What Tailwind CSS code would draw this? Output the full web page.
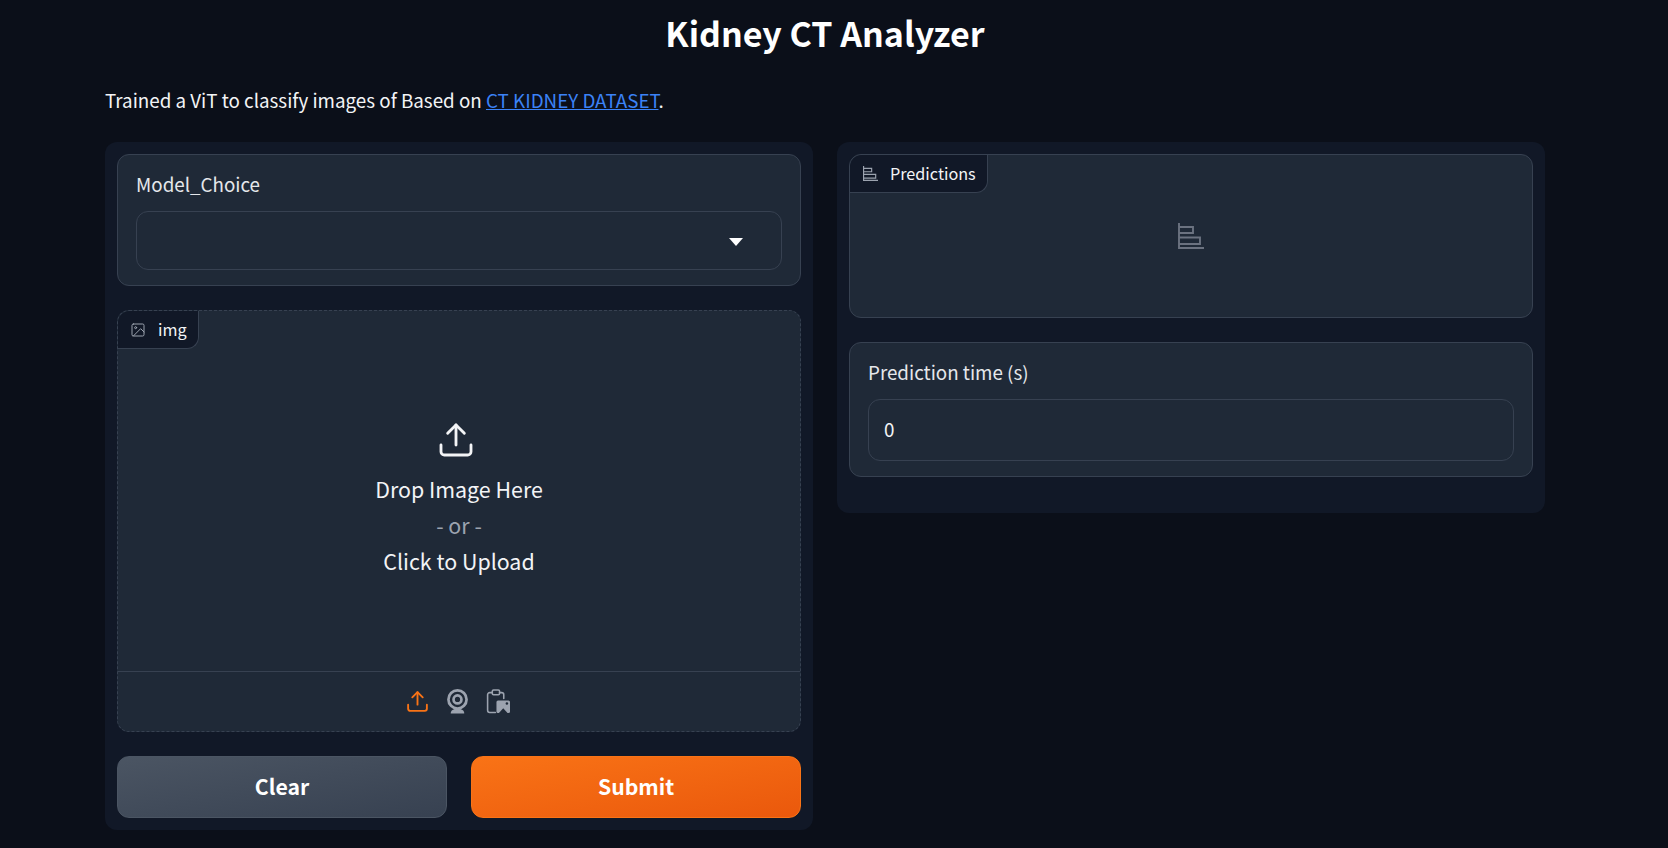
<!DOCTYPE html>
<html lang="en">

<head>
    <meta charset="UTF-8">
    <meta name="viewport" content="width=device-width, initial-scale=1.0">
    <title>Kidney CT Analyzer</title>
    <script src="https://cdn.jsdelivr.net/npm/@tailwindcss/browser@4"></script>
</head>

<body class="bg-[#0b0f19] text-[#f3f4f6] font-['Noto_Sans_CJK_SC','Noto_Sans',sans-serif] overflow-hidden">

    <div class="w-[1440px] h-[848px] ml-[105px]">
        <h1 class="h-[68px] pt-[8px] text-center text-[34px] leading-[50px] font-semibold text-white">Kidney CT Analyzer</h1>

        <p class="h-[74px] pt-[18px] text-[18.8px] leading-[28px]">Trained a ViT to classify images of Based on <a href="#" class="text-[#3b82f6] underline">CT KIDNEY DATASET</a>.</p>

        <div class="flex items-start gap-6">
            <!-- left column -->
            <div class="w-[708px] h-[688px] flex flex-col gap-6 p-3 bg-[#111827] rounded-xl">
                <div class="h-[132px] px-[18px] pt-[15px] bg-[#1f2937] border border-[#374151] rounded-xl">
                    <label class="block h-[41px] text-[18.8px] leading-[28px] text-[#e5e7eb]">Model_Choice</label>
                    <div class="h-[59px] flex items-center justify-end pr-[38px] bg-[#1f2937] border border-[#374151] rounded-xl">
                        <span class="w-0 h-0 mt-[3px] border-x-[7px] border-x-transparent border-t-[8px] border-t-white"></span>
                    </div>
                </div>

                <div class="relative h-[422px] flex flex-col bg-[#1f2937] border border-dashed border-[#374151] rounded-xl">
                    <div class="absolute top-0 left-0 h-[38px] w-[81px] flex items-center gap-[11px] pl-[12px] bg-[#111827] border-r border-b border-[#374151] rounded-tl-xl rounded-br-xl">
                        <svg class="w-4 h-4 text-[#9ca3af]" viewBox="0 0 24 24" fill="none" stroke="currentColor" stroke-width="1.5" stroke-linecap="round" stroke-linejoin="round"><rect x="3" y="3" width="18" height="18" rx="2"/><circle cx="8.5" cy="8.5" r="1.5"/><polyline points="21 15 16 10 5 21"/></svg>
                        <span class="ml-px -mt-[2px] text-[16.2px] leading-[26px]">img</span>
                    </div>
                    <div class="flex-1 flex flex-col items-center pt-[109px]">
                        <svg class="w-[40px] h-[40px] mr-[6px] text-[#f3f4f6]" viewBox="0 0 24 24" fill="none" stroke="currentColor" stroke-width="1.7" stroke-linecap="round" stroke-linejoin="round"><path d="M21 15v4a2 2 0 0 1-2 2H5a2 2 0 0 1-2-2v-4"/><polyline points="17 8 12 3 7 8"/><line x1="12" y1="3" x2="12" y2="15"/></svg>
                        <div class="mt-[11px] text-[21.4px] leading-[36px] text-[#f3f4f6]">Drop Image Here</div>
                        <div class="text-[21.4px] leading-[36px] text-[#9ca3af]">- or -</div>
                        <div class="text-[21.4px] leading-[36px] text-[#f3f4f6]">Click to Upload</div>
                    </div>
                    <div class="h-[60px] flex items-center justify-center gap-[15px] pr-[3px] border-t border-[#374151]">
                        <svg class="w-[25px] h-[25px] text-[#f97316]" viewBox="0 0 24 24" fill="none" stroke="currentColor" stroke-width="1.8" stroke-linecap="round" stroke-linejoin="round"><path d="M21 15v4a2 2 0 0 1-2 2H5a2 2 0 0 1-2-2v-4"/><polyline points="17 8 12 3 7 8"/><line x1="12" y1="3" x2="12" y2="15"/></svg>
                        <svg class="w-[25px] h-[25px] text-[#9ca3af]" viewBox="0 0 24 24" fill="none" stroke="currentColor" stroke-width="2.6"><circle cx="12" cy="10" r="8.700"/><circle cx="12" cy="10" r="3.800"/><path d="M5.500 23.500c0-3 2.500-4.500 6.500-4.500s6.500 1.500 6.500 4.500z" fill="currentColor" stroke="none"/></svg>
                        <svg class="w-[25px] h-[25px] text-[#9ca3af]" viewBox="0 0 24 24" fill="none" stroke="currentColor" stroke-width="1.5" stroke-linecap="round" stroke-linejoin="round"><path d="M7 3.500H4.500a2 2 0 0 0-2 2v15a2 2 0 0 0 2 2H10"/><path d="M14 3.500h2a2 2 0 0 1 2 2v3.500"/><rect x="7" y="1" width="7" height="4.500" rx="1.200"/><rect x="11" y="11" width="13" height="12" rx="1.500" fill="currentColor" stroke="none"/><path d="M12.500 24l5-5.500 5 5.500z" fill="#1f2937" stroke="none"/><circle cx="21" cy="14" r="1.200" fill="#1f2937" stroke="none"/></svg>
                    </div>
                </div>

                <div class="flex gap-6">
                    <button class="flex-1 h-[62px] pb-[2px] text-[21.2px] leading-[32px] font-semibold text-white bg-gradient-to-br from-[#4b5563] to-[#374151] border border-[#4b5563] rounded-xl">Clear</button>
                    <button class="flex-1 h-[62px] pb-[2px] text-[21.2px] leading-[32px] font-semibold text-white bg-gradient-to-br from-[#f97316] to-[#ea580c] border border-[#f97316] rounded-xl">Submit</button>
                </div>
            </div>

            <!-- right column -->
            <div class="w-[708px] h-[371px] flex flex-col gap-6 p-3 bg-[#111827] rounded-xl">
                <div class="relative h-[164px] flex items-center justify-center bg-[#1f2937] border border-[#374151] rounded-xl">
                    <div class="absolute top-0 left-0 h-[38px] w-[138px] flex items-center gap-[12px] pl-[13px] bg-[#111827] border-r border-b border-[#374151] rounded-tl-xl rounded-br-xl">
                        <svg class="w-[15px] h-[15px] text-[#9ca3af]" viewBox="0 0 26 26" fill="none" stroke="currentColor" stroke-width="2"><path d="M1 0v25h25"/><path d="M1 4h14v6H1"/><path d="M1 14.500h21v6.500H1"/></svg>
                        <span class="-mt-[2px] text-[16.2px] leading-[26px]">Predictions</span>
                    </div>
                    <svg class="w-[26px] h-[26px] text-[#6b7280]" viewBox="0 0 26 26" fill="none" stroke="currentColor" stroke-width="1.900"><path d="M1 0v25h25"/><path d="M1 4h14v6H1"/><path d="M1 14.500h21v6.500H1"/></svg>
                </div>

                <div class="h-[135px] px-[18px] pt-[15px] bg-[#1f2937] border border-[#374151] rounded-xl">
                    <label class="block h-[41px] text-[18.8px] leading-[28px] text-[#e5e7eb]">Prediction time (s)</label>
                    <div class="h-[62px] flex items-center px-[15px] pb-[2px] text-[18.8px] leading-[28px] bg-[#1f2937] border border-[#374151] rounded-xl">0</div>
                </div>
            </div>
        </div>
    </div>

</body>

</html>
